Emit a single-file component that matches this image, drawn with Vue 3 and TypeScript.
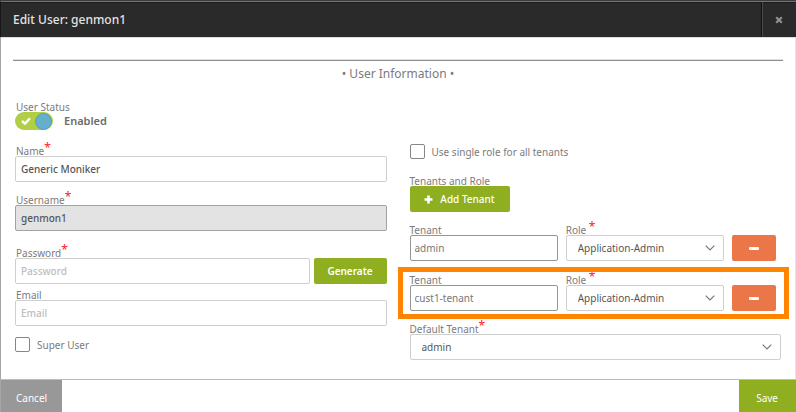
<script setup lang="ts">
import { ref } from 'vue'

interface TenantRole {
  tenant: string
  role: string
  highlighted: boolean
}

const enabled = ref(true)
const name = ref('Generic Moniker')
const username = ref('genmon1')
const password = ref('')
const email = ref('')
const superUser = ref(false)
const singleRole = ref(false)
const defaultTenant = ref('admin')
const rows = ref<TenantRole[]>([
  { tenant: 'admin', role: 'Application-Admin', highlighted: false },
  { tenant: 'cust1-tenant', role: 'Application-Admin', highlighted: true },
])

function addTenant(): void {
  rows.value.push({ tenant: '', role: 'Application-Admin', highlighted: false })
}

function removeTenant(index: number): void {
  rows.value.splice(index, 1)
}

function generate(): void {
  password.value = Math.random().toString(36).slice(2, 14)
}
</script>

<template>
  <form class="dialog" @submit.prevent>
    <header class="header">
      <h1 class="title">Edit User: genmon1</h1>
      <button type="button" class="close" aria-label="Close">
        <svg viewBox="0 0 8 8" width="8" height="8"><path d="M1.2 1.2 6.8 6.8M6.8 1.2 1.2 6.8" stroke="currentColor" stroke-width="2.2" /></svg>
      </button>
    </header>

    <main class="content">
      <h2 class="section-title">• User Information •</h2>
      <div class="columns">
        <div class="column details">
          <div class="field status">
            <label class="label" for="status">User Status</label>
            <div class="status-line">
              <span class="toggle">
                <input id="status" v-model="enabled" type="checkbox" class="toggle-input" role="switch" />
                <svg class="tick" viewBox="0 0 10 8" width="10" height="8"><path d="M1 4 4 6.6 9 1.2" fill="none" stroke="#fff" stroke-width="2.4" /></svg>
                <span class="knob"></span>
              </span>
              <strong class="status-text">Enabled</strong>
            </div>
          </div>
          <div class="field name">
            <label class="label" for="name">Name<span class="required">*</span></label>
            <input id="name" v-model="name" class="control" type="text" />
          </div>
          <div class="field username">
            <label class="label" for="username">Username<span class="required">*</span></label>
            <input id="username" v-model="username" class="control locked" type="text" readonly />
          </div>
          <div class="field password">
            <label class="label" for="password">Password<span class="required">*</span></label>
            <div class="password-line">
              <input id="password" v-model="password" class="control" type="password" placeholder="Password" />
              <button type="button" class="button generate" @click="generate">Generate</button>
            </div>
          </div>
          <div class="field email">
            <label class="label" for="email">Email</label>
            <input id="email" v-model="email" class="control" type="email" placeholder="Email" />
          </div>
          <label class="check"><input v-model="superUser" type="checkbox" class="box" />Super User</label>
        </div>

        <div class="column tenants">
          <label class="check single"><input v-model="singleRole" type="checkbox" class="box" />Use single role for all tenants</label>
          <div class="field">
            <span class="label">Tenants and Role</span>
            <button type="button" class="button add" @click="addTenant">
              <svg viewBox="0 0 9 9" width="9" height="9"><path d="M4.5 0.5V8.5M0.5 4.5H8.5" stroke="#fff" stroke-width="2.6" /></svg>
              Add Tenant
            </button>
          </div>
          <div v-for="(row, i) in rows" :key="i" class="tenant-row" :class="{ highlighted: row.highlighted }">
            <div class="field tenant-field">
              <label class="label" :for="`tenant-${i}`">Tenant</label>
              <input :id="`tenant-${i}`" v-model="row.tenant" class="control strong" type="text" />
            </div>
            <div class="field role-field">
              <label class="label" :for="`role-${i}`">Role <span class="required">*</span></label>
              <div class="select">
                <select :id="`role-${i}`" v-model="row.role" class="control">
                  <option>Application-Admin</option>
                </select>
                <svg class="chevron" viewBox="0 0 10 6" width="10" height="6"><path d="M0.7 0.7 5 5 9.3 0.7" fill="none" stroke="#777" stroke-width="1.2" /></svg>
              </div>
            </div>
            <button type="button" class="button remove" aria-label="Remove tenant" @click="removeTenant(i)">
              <svg viewBox="0 0 10 3" width="10" height="3"><rect width="10" height="3" rx="1" fill="#fff" /></svg>
            </button>
          </div>
          <div class="field">
            <label class="label" for="default-tenant">Default Tenant<span class="required">*</span></label>
            <div class="select">
              <select id="default-tenant" v-model="defaultTenant" class="control">
                <option>admin</option>
              </select>
              <svg class="chevron" viewBox="0 0 10 6" width="10" height="6"><path d="M0.7 0.7 5 5 9.3 0.7" fill="none" stroke="#777" stroke-width="1.2" /></svg>
            </div>
          </div>
        </div>
      </div>
    </main>

    <footer class="footer">
      <button type="button" class="action cancel">Cancel</button>
      <button type="submit" class="action save">Save</button>
    </footer>
  </form>
</template>

<style>
body {
  margin: 0;
  background: #fff;
}
</style>

<style scoped>
* {
  box-sizing: border-box;
}

.dialog {
  display: flex;
  flex-direction: column;
  min-height: 100vh;
  border-top: 1px solid #3c3c3d;
  font-family: "Noto Sans", "Open Sans", sans-serif;
  font-size: 10px;
  color: #7b7b7b;
}

button,
input,
select {
  margin: 0;
  font: inherit;
}

button {
  padding: 0;
  border: 0;
  cursor: pointer;
}

.header {
  display: flex;
  height: 36px;
  border-top: 1px solid #747475;
  border-left: 1px solid #171718;
  background: #2a2a2b;
  box-shadow: inset 0 1px #1c1c1d, 0 1px #dedede;
}

.title {
  flex: 1;
  margin: 0;
  padding-left: 12px;
  font-size: 12px;
  font-weight: 500;
  line-height: 36px;
  color: #e2e2e2;
}

.close {
  display: grid;
  place-items: center;
  width: 35px;
  border-left: 1px solid #111;
  background: transparent;
  box-shadow: inset 1px 0 #49494b;
  color: #8f8f96;
}

.content {
  flex: 1;
  padding: 23px 14px 18px 14px;
  border-left: 1px solid #a5a5a5;
  border-right: 1px solid #e6e6e6;
}

.section-title {
  margin: 0 -2px;
  border-top: 1px solid #8e8e8e;
  box-shadow: 0 -1px #e2e2e2;
  font-size: 12px;
  font-weight: 400;
  line-height: 25px;
  text-align: center;
}

.columns {
  display: grid;
  grid-template-columns: minmax(0, 1fr) minmax(0, 1fr);
  gap: 23px;
  margin-top: 16px;
}

.column {
  display: flex;
  flex-direction: column;
}

.tenants {
  gap: 13px;
  padding-top: 42px;
}

.field {
  display: flex;
  flex-direction: column;
}

.status {
  margin-bottom: 16px;
}

.name {
  margin-bottom: 13px;
}

.username {
  margin-bottom: 17px;
}

.password {
  margin-bottom: 6px;
}

.email {
  margin-bottom: 11px;
}

.label {
  display: flex;
  height: 10px;
  line-height: 10px;
  white-space: pre;
}

.details .label {
  padding-left: 1px;
}

.required {
  font-size: 12px;
  line-height: 4px;
  color: #ff1a1a;
}

.control {
  appearance: none;
  width: 100%;
  min-width: 0;
  height: 26px;
  padding: 0 5px;
  border: 1px solid #cfcfcf;
  border-radius: 2px;
  outline: 0;
  background: #fff;
  color: #565656;
}

.details .control {
  font-weight: 500;
}

.control::placeholder {
  color: #bdbdbd;
  opacity: 1;
}

.control.locked {
  border-color: #a2a2a2;
  background: #e3e3e3;
}

.control.strong {
  padding-left: 4px;
  border-color: #969696;
  color: #777;
}

.status-line {
  display: flex;
  align-items: center;
  gap: 11px;
  height: 18px;
}

.toggle {
  position: relative;
  width: 38px;
  height: 18px;
}

.toggle-input {
  appearance: none;
  display: block;
  width: 38px;
  height: 18px;
  border-radius: 9px;
  background: #b0cf45;
}

.tick {
  position: absolute;
  top: 5px;
  left: 6px;
  pointer-events: none;
}

.knob {
  position: absolute;
  top: 1px;
  right: 1px;
  width: 17px;
  height: 17px;
  border: 1px solid #4da0d5;
  border-radius: 50%;
  background: #66aecb;
  pointer-events: none;
}

.status-text {
  font-size: 11px;
  font-weight: 600;
  line-height: 18px;
  color: #6c6c6c;
}

.password-line {
  display: flex;
  gap: 4px;
}

.button {
  border-radius: 2px;
  background: #8fae20;
  color: #fff;
}

.generate {
  flex: 0 0 73px;
  font-weight: 600;
}

.add {
  display: flex;
  align-items: center;
  justify-content: center;
  gap: 7px;
  width: 100px;
  height: 26px;
  font-weight: 500;
}

.check {
  display: flex;
  align-items: center;
  gap: 7px;
  height: 15px;
}

.single {
  margin-bottom: 4px;
}

.box {
  appearance: none;
  width: 15px;
  height: 15px;
  border: 1px solid #868686;
  border-radius: 2px;
  background: #fff;
}

.tenant-row {
  position: relative;
  display: flex;
  align-items: flex-end;
  gap: 8px;
  padding-right: 5px;
}

.tenant-row.highlighted {
  margin-top: 1px;
}

.tenant-row.highlighted::after {
  content: "";
  position: absolute;
  inset: -8px -8px -8px -12px;
  border: 5px solid #ff8400;
  pointer-events: none;
}

.tenant-field {
  flex: 148 1 0;
}

.role-field {
  flex: 158 1 0;
}

.select {
  position: relative;
}

.select .control {
  display: block;
  padding-left: 11px;
}

.chevron {
  position: absolute;
  top: 10px;
  right: 9px;
  pointer-events: none;
}

.remove {
  display: grid;
  place-items: center;
  flex: 0 0 44px;
  height: 26px;
  background: #eb7748;
}

.footer {
  display: flex;
  justify-content: space-between;
  border-top: 1px solid #bcbcbc;
  border-left: 1px solid #a5a5a5;
}

.action {
  height: 32px;
  padding: 3px 15px 0;
  color: #fff;
}

.cancel {
  background: #989898;
}

.save {
  padding: 3px 18px 0 17px;
  background: #8fae20;
}
</style>
